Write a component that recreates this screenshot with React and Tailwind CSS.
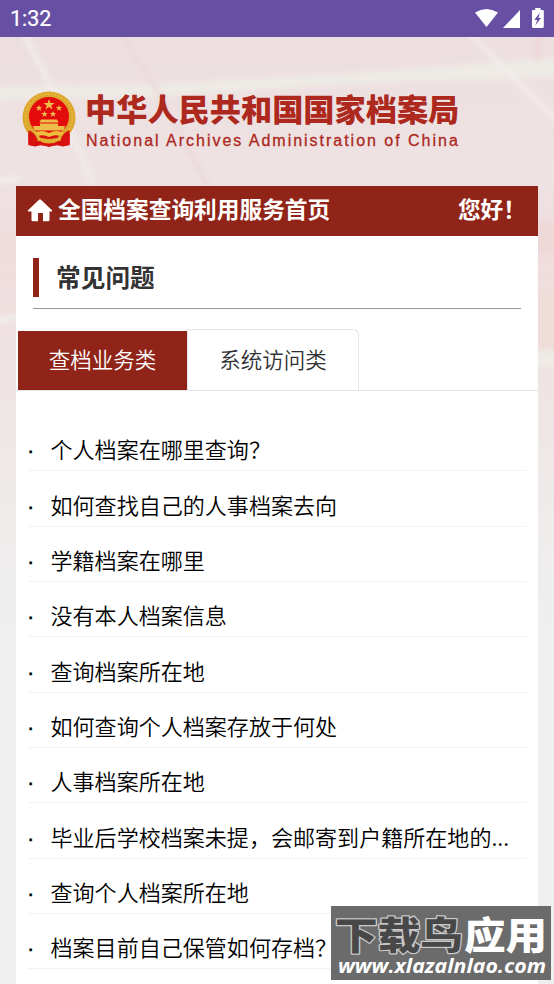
const questions = [
    "个人档案在哪里查询？",
    "如何查找自己的人事档案去向",
    "学籍档案在哪里",
    "没有本人档案信息",
    "查询档案所在地",
    "如何查询个人档案存放于何处",
    "人事档案所在地",
    "毕业后学校档案未提，会邮寄到户籍所在地的...",
    "查询个人档案所在地",
    "档案目前自己保管如何存档？",
];

function StatusBar() {
    return (
        <div className="flex h-[37px] items-center justify-between bg-[#6750a4] pl-[10px] text-white">
            <span className="mt-px font-[Roboto] text-[21.5px] leading-none [-webkit-text-stroke:0.2px]">1:32</span>
            <svg className="h-[37px] w-[84px]" viewBox="470 0 84 37" fill="white">
                <path d="M475 12.5Q486.5 5.5 498 12.5L486.5 27Z" />
                <path d="M520 10V28H503Z" />
                <path d="M535.2 8h5.4v2h2.2q1 0 1 1v15.500q0 1.500-1.500 1.500h-8.800q-1.500 0-1.500-1.500V11q0-1 1-1h2.200z" />
                <path d="M539.800 12.500L534.300 20h3L535.300 25.500L541 18h-2.500z" fill="#6750a4" />
            </svg>
        </div>
    )
}

function Backdrop() {
    return (
        <svg className="absolute inset-0 h-full w-full" viewBox="0 37 554 947" preserveAspectRatio="none">
            <defs>
                <linearGradient id="side" x1="0" y1="37" x2="0" y2="984" gradientUnits="userSpaceOnUse">
                    <stop offset="0" stopColor="#eddfe0" />
                    <stop offset=".15" stopColor="#eee2e3" />
                    <stop offset=".23" stopColor="#f0dcdd" />
                    <stop offset=".34" stopColor="#eee3e2" />
                    <stop offset=".5" stopColor="#efebeb" />
                    <stop offset=".62" stopColor="#efefef" />
                </linearGradient>
                <filter id="soft" x="-20%" y="-50%" width="140%" height="200%">
                    <feGaussianBlur stdDeviation="2.5" />
                </filter>
            </defs>
            <rect y="37" width="554" height="947" fill="url(#side)" />
            <g filter="url(#soft)">
                <path d="M-10 86L140 85L350 73L570 57V77L350 84L140 98L-10 101Z" fill="#eeeae5" />
                <path d="M22 30L51 86L94 186" stroke="#f1ecec" strokeWidth="5" fill="none" />
                <path d="M122 34L152 82L210 190" stroke="#e8d5d7" strokeWidth="3" fill="none" />
                <path d="M470 34L510 74L560 125" stroke="#f3eeeb" strokeWidth="5" fill="none" />
                <path d="M538 34V60" stroke="#edd3d6" strokeWidth="5" />
                <path d="M-5 182L20 178M-5 322L20 316" stroke="#f0edeb" strokeWidth="6" />
                <path d="M535 222h24v30h-24z" fill="#eed7d7" />
                <path d="M535 292h24v56h-24z" fill="#efddd9" />
                <path d="M535 359h24" stroke="#efebe6" strokeWidth="15" />
            </g>
        </svg>
    )
}

function Emblem() {
    return (
        <svg className="h-[58px] w-[54px] shrink-0" viewBox="0 0 54 58">
            <path d="M6 38H48L47.500 54L41 55.500L34 54L27 56L20 54L13 55.500L6.500 54Z" fill="#d91010" />
            <path d="M10 44v10M14 46v8M18 49v5M36 49v5M40 46v8M44 44v10" stroke="#a70d0d" />
            <ellipse cx="27" cy="26.500" rx="26.500" ry="26" fill="#dda72e" />
            <ellipse cx="27" cy="26.500" rx="23.500" ry="23.500" fill="none" stroke="#e6b73f" strokeWidth="2" strokeDasharray="2 1.500" />
            <ellipse cx="27" cy="25.500" rx="20" ry="19.500" fill="#e40b0d" />
            <g fill="#edbd4a">
                <path d="M27 8l1.400 4h4.200l-3.400 2.500 1.300 4-3.500-2.500-3.500 2.500 1.300-4-3.400-2.500h4.200z" />
                <path id="star" d="M17 14l.9 2 2.200.1-1.700 1.400.6 2.200-2-1.200-2 1.200.6-2.200-1.700-1.400 2.200-.1z" />
                <use href="#star" x="20" />
                <use href="#star" x="5.500" y="6" />
                <use href="#star" x="14" y="6" />
                <path d="M19 28.500h16l1.500 3h-19zM18 32.500h18v3H18zM11 35h32l-1.500 4.500h-29z" />
            </g>
            <path d="M6.500 39q7 3 9 10l-3 6-6-1zM47.500 39q-7 3-9 10l3 6 6-1z" fill="#d91010" />
            <path d="M16 44h22l-3 3-8 1-8-1z" fill="#d91010" />
            <path d="M12 42q8-4 15 0q7-4 15 0l-4 3q-5-2-11 1q-6-3-11-1z" fill="#edbd3b" />
            <path d="M16 50q5 0 7 5l-5-1zM38 50q-5 0-7 5l5-1z" fill="#d91010" />
        </svg>
    )
}

function HomeIcon() {
    return (
        <svg className="mr-[5px] -mt-px h-[23px] w-[26px]" viewBox="0 0 26 23" fill="white">
            <path d="M12 .7q1-.8 2 0L25 11.200q.6.900-.5 1.300H22.500V21q0 1.300-1.300 1.300H16V14h-5v8.300H5.800Q4.500 22.300 4.500 21V12.500H1.500Q.4 12.100 1 11.200Z" />
        </svg>
    )
}

function Header() {
    return (
        <header className="flex h-[149px] items-start pl-[22px] pt-[54px]">
            <Emblem />
            <div className="ml-[9px] text-[#ad281d]">
                <p className="-mt-[2px] h-[40px] whitespace-nowrap text-[31.200px] font-black leading-[38px]">中华人民共和国国家档案局</p>
                <p className="ml-px whitespace-nowrap font-['Liberation_Sans'] text-[16px] leading-[23px] tracking-[1.980px] [-webkit-text-stroke:0.3px]">
                    National Archives Administration of China
                </p>
            </div>
        </header>
    )
}

function Watermark() {
    return (
        <div className="absolute left-[331px] top-[906px] h-[74px] w-[220px] bg-[#6b6b6b]">
            <svg className="h-full w-full" viewBox="0 0 220 74">
                <g fontSize="38" fontWeight="900" paintOrder="stroke" strokeLinejoin="round">
                    <text x="4" y="43" textLength="128" lengthAdjust="spacingAndGlyphs" fill="#484848" stroke="#c9c9c9" strokeWidth="2.500">下载鸟</text>
                    <text x="133" y="43" textLength="83" lengthAdjust="spacingAndGlyphs" fill="white">应用</text>
                </g>
                <text x="7" y="67" textLength="208" lengthAdjust="spacingAndGlyphs" fill="white" fontFamily="Open Sans" fontSize="20" fontWeight="700" fontStyle="italic">www.xlazalnlao.com</text>
            </svg>
        </div>
    )
}

function App() {
    return (
        <div className="relative h-[984px] w-[554px] overflow-hidden font-['Noto_Sans_CJK_SC',sans-serif]">
            <StatusBar />
            <div className="relative h-[947px]">
                <Backdrop />
                <div className="relative">
                    <Header />
                    <main className="ml-4 h-[798px] w-[522px] bg-white">
                        <div className="flex h-[50px] items-center bg-[#912418] pl-[11px] pr-[12px] text-[22.700px] font-bold leading-[46px] text-white">
                            <HomeIcon />
                            <span className="-mt-[5px]">全国档案查询利用服务首页</span>
                            <span className="ml-auto -mt-[4px]">您好！</span>
                        </div>

                        <div className="mx-[17px] flex h-[73px] items-center border-b border-[#999] pt-[11px]">
                            <div className="h-[39px] w-[6px] bg-[#912418]" />
                            <h1 className="-mt-[3px] ml-[17px] text-[24.700px] font-bold leading-[39px] text-[#333]">常见问题</h1>
                        </div>

                        <div className="mt-5 flex h-[62px] border-b border-[#e4e7ed] pl-[2px] text-[21.500px] font-[350] text-[#303133]">
                            <div className="mt-[2px] flex w-[169px] items-center justify-center bg-[#912418] pb-[3px] text-white">查档业务类</div>
                            <div className="flex w-[172px] items-center justify-center rounded-tr-md border-x border-t border-[#e4e7ed] pb-[2px]">系统访问类</div>
                        </div>

                        <ul className="ml-[12px] w-[498px] pt-[25px] text-[22.050px] font-[350] text-black">
                            {questions.map((question) => (
                                <li key={question} className="flex h-[55.350px] items-end border-b border-[#f3f3f3] pb-[5px] leading-[34px]">
                                    <span className="-mb-[3px] -ml-px mr-[1.500px] w-[22px] shrink-0 font-['Liberation_Sans'] font-normal [-webkit-text-stroke:0.4px]">·</span>
                                    <span className="whitespace-nowrap">{question}</span>
                                </li>
                            ))}
                        </ul>
                    </main>
                </div>
            </div>
            <Watermark />
        </div>
    )
}

export default App
